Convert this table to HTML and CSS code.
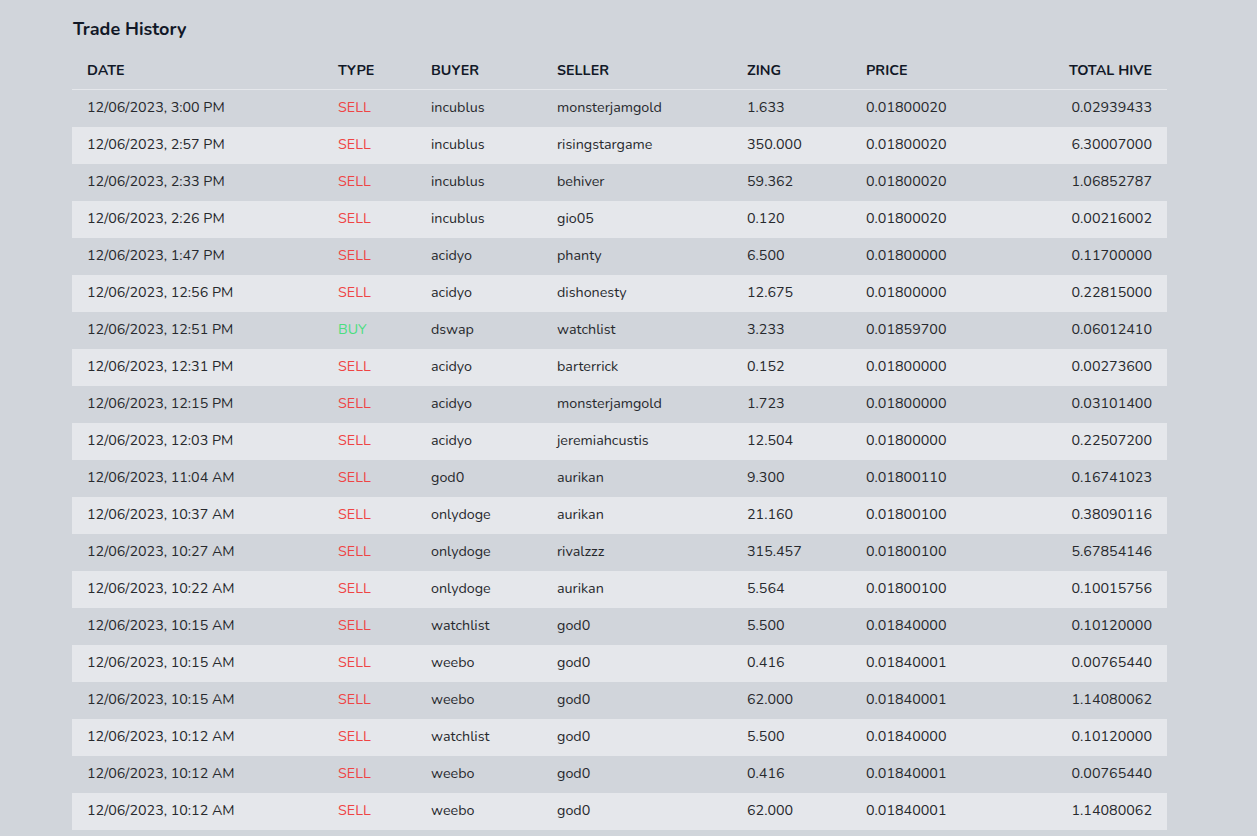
FILE: index.html
```html
<!DOCTYPE html>
<html>
<head>
<meta charset="utf-8">
<link rel="stylesheet" href="styles.css">
</head>
<body>
<div class="page">
  <h2 class="title">Trade History</h2>
  <table class="trades">
    <colgroup>
      <col class="c-date"><col class="c-type"><col class="c-buyer"><col class="c-seller"><col class="c-zing"><col class="c-price"><col>
    </colgroup>
    <thead>
      <tr><th>DATE</th><th>TYPE</th><th>BUYER</th><th>SELLER</th><th>ZING</th><th>PRICE</th><th class="r">TOTAL HIVE</th></tr>
    </thead>
    <tbody>
      <tr><td>12/06/2023, 3:00 PM</td><td class="sell">SELL</td><td>incublus</td><td>monsterjamgold</td><td>1.633</td><td>0.01800020</td><td class="r">0.02939433</td></tr>
      <tr><td>12/06/2023, 2:57 PM</td><td class="sell">SELL</td><td>incublus</td><td>risingstargame</td><td>350.000</td><td>0.01800020</td><td class="r">6.30007000</td></tr>
      <tr><td>12/06/2023, 2:33 PM</td><td class="sell">SELL</td><td>incublus</td><td>behiver</td><td>59.362</td><td>0.01800020</td><td class="r">1.06852787</td></tr>
      <tr><td>12/06/2023, 2:26 PM</td><td class="sell">SELL</td><td>incublus</td><td>gio05</td><td>0.120</td><td>0.01800020</td><td class="r">0.00216002</td></tr>
      <tr><td>12/06/2023, 1:47 PM</td><td class="sell">SELL</td><td>acidyo</td><td>phanty</td><td>6.500</td><td>0.01800000</td><td class="r">0.11700000</td></tr>
      <tr><td>12/06/2023, 12:56 PM</td><td class="sell">SELL</td><td>acidyo</td><td>dishonesty</td><td>12.675</td><td>0.01800000</td><td class="r">0.22815000</td></tr>
      <tr><td>12/06/2023, 12:51 PM</td><td class="buy">BUY</td><td>dswap</td><td>watchlist</td><td>3.233</td><td>0.01859700</td><td class="r">0.06012410</td></tr>
      <tr><td>12/06/2023, 12:31 PM</td><td class="sell">SELL</td><td>acidyo</td><td>barterrick</td><td>0.152</td><td>0.01800000</td><td class="r">0.00273600</td></tr>
      <tr><td>12/06/2023, 12:15 PM</td><td class="sell">SELL</td><td>acidyo</td><td>monsterjamgold</td><td>1.723</td><td>0.01800000</td><td class="r">0.03101400</td></tr>
      <tr><td>12/06/2023, 12:03 PM</td><td class="sell">SELL</td><td>acidyo</td><td>jeremiahcustis</td><td>12.504</td><td>0.01800000</td><td class="r">0.22507200</td></tr>
      <tr><td>12/06/2023, 11:04 AM</td><td class="sell">SELL</td><td>god0</td><td>aurikan</td><td>9.300</td><td>0.01800110</td><td class="r">0.16741023</td></tr>
      <tr><td>12/06/2023, 10:37 AM</td><td class="sell">SELL</td><td>onlydoge</td><td>aurikan</td><td>21.160</td><td>0.01800100</td><td class="r">0.38090116</td></tr>
      <tr><td>12/06/2023, 10:27 AM</td><td class="sell">SELL</td><td>onlydoge</td><td>rivalzzz</td><td>315.457</td><td>0.01800100</td><td class="r">5.67854146</td></tr>
      <tr><td>12/06/2023, 10:22 AM</td><td class="sell">SELL</td><td>onlydoge</td><td>aurikan</td><td>5.564</td><td>0.01800100</td><td class="r">0.10015756</td></tr>
      <tr><td>12/06/2023, 10:15 AM</td><td class="sell">SELL</td><td>watchlist</td><td>god0</td><td>5.500</td><td>0.01840000</td><td class="r">0.10120000</td></tr>
      <tr><td>12/06/2023, 10:15 AM</td><td class="sell">SELL</td><td>weebo</td><td>god0</td><td>0.416</td><td>0.01840001</td><td class="r">0.00765440</td></tr>
      <tr><td>12/06/2023, 10:15 AM</td><td class="sell">SELL</td><td>weebo</td><td>god0</td><td>62.000</td><td>0.01840001</td><td class="r">1.14080062</td></tr>
      <tr><td>12/06/2023, 10:12 AM</td><td class="sell">SELL</td><td>watchlist</td><td>god0</td><td>5.500</td><td>0.01840000</td><td class="r">0.10120000</td></tr>
      <tr><td>12/06/2023, 10:12 AM</td><td class="sell">SELL</td><td>weebo</td><td>god0</td><td>0.416</td><td>0.01840001</td><td class="r">0.00765440</td></tr>
      <tr><td>12/06/2023, 10:12 AM</td><td class="sell">SELL</td><td>weebo</td><td>god0</td><td>62.000</td><td>0.01840001</td><td class="r">1.14080062</td></tr>
    </tbody>
  </table>
</div>
</body>
</html>
```

FILE: styles.css
```css
html, body {
  margin: 0;
  padding: 0;
  background: #d1d5db;
}
body {
  font-family: "Nunito", "Lato", "Open Sans", sans-serif;
  color: #1f2328;
}
.page {
  padding: 17px 90px 0 72px;
}
.title {
  margin: 0 0 10px 1px;
  font-size: 18px;
  font-weight: 700;
  line-height: 24px;
  color: #111827;
}
.trades {
  width: 1095px;
  border-collapse: collapse;
  table-layout: fixed;
  font-size: 14.3px;
}
.c-date { width: 251px; }
.c-type { width: 93px; }
.c-buyer { width: 126px; }
.c-seller { width: 190px; }
.c-zing { width: 119px; }
.c-price { width: 150px; }
.trades th {
  text-align: left;
  font-weight: 700;
  padding: 10px 15px 8px 15px;
  line-height: 20px;
  color: #111827;
  border-bottom: 1px solid #e5e7eb;
}
.trades td {
  padding: 8px 15px 9px 15px;
  line-height: 20px;
  color: #27292d;
  white-space: nowrap;
}
.trades tbody tr:nth-child(even) {
  background: #e5e7eb;
}
.trades .r { text-align: right; }
.trades td.sell { color: #ef4444; }
.trades td.buy { color: #4ade80; }
```
